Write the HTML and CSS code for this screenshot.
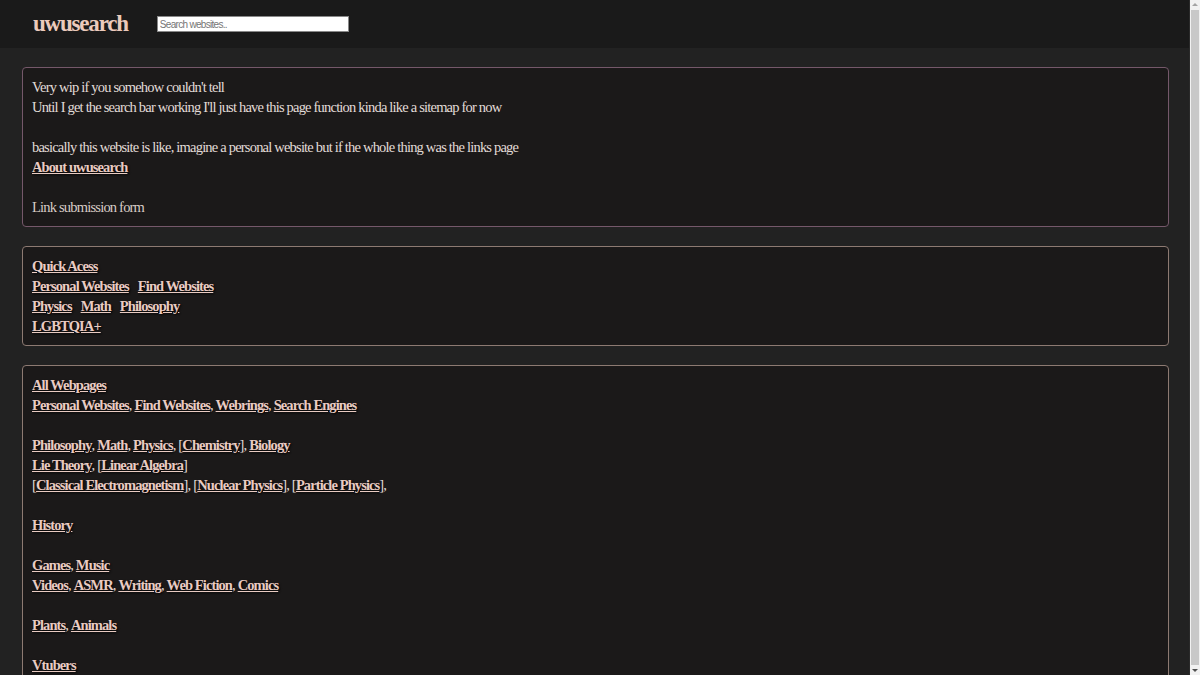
FILE: index.html
```html
<!DOCTYPE html>
<html>
<head>
<meta charset="utf-8">
<title>uwusearch</title>
<link rel="stylesheet" href="styles.css">
</head>
<body>
<div class="page">
  <header class="topbar">
    <a class="logo" href="#">uwusearch</a>
    <input class="search" type="text" placeholder="Search websites..">
  </header>
  <main class="content">
    <section class="card card-intro">
      <p>Very wip if you somehow couldn't tell</p>
      <p>Until I get the search bar working I'll just have this page function kinda like a sitemap for now</p>
      <p class="blank">&nbsp;</p>
      <p>basically this website is like, imagine a personal website but if the whole thing was the links page</p>
      <p><a class="lnk" href="#">About uwusearch</a></p>
      <p class="blank">&nbsp;</p>
      <p class="plain">Link submission form</p>
    </section>
    <section class="card card-links">
      <p><a class="lnk" href="#">Quick Acess</a></p>
      <p class="spaced"><a class="lnk" href="#">Personal Websites</a><a class="lnk" href="#">Find Websites</a></p>
      <p class="spaced"><a class="lnk" href="#">Physics</a><a class="lnk" href="#">Math</a><a class="lnk" href="#">Philosophy</a></p>
      <p><a class="lnk" href="#">LGBTQIA+</a></p>
    </section>
    <section class="card card-links">
      <p><a class="lnk" href="#">All Webpages</a></p>
      <p><a class="lnk" href="#">Personal Websites</a>, <a class="lnk" href="#">Find Websites</a>, <a class="lnk" href="#">Webrings</a>, <a class="lnk" href="#">Search Engines</a></p>
      <p class="blank">&nbsp;</p>
      <p><a class="lnk" href="#">Philosophy</a>, <a class="lnk" href="#">Math</a>, <a class="lnk" href="#">Physics</a>, [<a class="lnk" href="#">Chemistry</a>], <a class="lnk" href="#">Biology</a></p>
      <p><a class="lnk" href="#">Lie Theory</a>, [<a class="lnk" href="#">Linear Algebra</a>]</p>
      <p>[<a class="lnk" href="#">Classical Electromagnetism</a>], [<a class="lnk" href="#">Nuclear Physics</a>], [<a class="lnk" href="#">Particle Physics</a>],</p>
      <p class="blank">&nbsp;</p>
      <p><a class="lnk" href="#">History</a></p>
      <p class="blank">&nbsp;</p>
      <p><a class="lnk" href="#">Games</a>, <a class="lnk" href="#">Music</a></p>
      <p><a class="lnk" href="#">Videos</a>, <a class="lnk" href="#">ASMR</a>, <a class="lnk" href="#">Writing</a>, <a class="lnk" href="#">Web Fiction</a>, <a class="lnk" href="#">Comics</a></p>
      <p class="blank">&nbsp;</p>
      <p><a class="lnk" href="#">Plants</a>, <a class="lnk" href="#">Animals</a></p>
      <p class="blank">&nbsp;</p>
      <p><a class="lnk" href="#">Vtubers</a></p>
    </section>
  </main>
</div>
<div class="scrollbar">
  <div class="arrow arrow-up"></div>
  <div class="thumb"></div>
  <div class="arrow arrow-down"></div>
</div>
</body>
</html>
```
FILE: styles.css
```css
html, body {
  margin: 0;
  padding: 0;
}
body {
  background: #222222;
  color: #e2dcd8;
  font-family: "Liberation Serif", "Times New Roman", serif;
  font-size: 14.5px;
  line-height: 20px;
  letter-spacing: -0.8px;
  overflow: hidden;
}
.page {
  margin-right: 10px;
}
.topbar {
  background: #1a1a1a;
  height: 48px;
  display: flex;
  align-items: center;
  padding-left: 33px;
}
.logo {
  color: #eccabc;
  font-weight: bold;
  font-size: 23px;
  letter-spacing: -1.2px;
  text-decoration: none;
  margin-right: 29px;
  margin-top: -1px;
}
.search {
  width: 192px;
  height: 16px;
  box-sizing: border-box;
  border: 1px solid #888;
  background: #fff;
  font-family: "Liberation Sans", Arial, sans-serif;
  font-size: 10px;
  letter-spacing: -0.7px;
  padding: 0 2px;
  margin: 0;
}
.search::placeholder {
  color: #767676;
}
.content {
  padding: 19px 21px 20px 22px;
  display: flex;
  flex-direction: column;
  gap: 19px;
}
.card {
  background: #1b1919;
  border: 1px solid #75586a;
  border-radius: 4px;
  padding: 9px;
}
.card-links {
  border-color: #8d7a72;
}
.card p {
  margin: 0;
  height: 20px;
  white-space: nowrap;
}
.lnk {
  color: #e9cbc2;
  font-weight: bold;
  letter-spacing: -0.9px;
  text-decoration: underline;
  text-shadow: 1px 1px 2px #000;
}
.spaced .lnk + .lnk {
  margin-left: 9px;
}
.plain {
  color: #d8ccc6;
}
.scrollbar {
  position: fixed;
  top: 0;
  right: 0;
  bottom: 0;
  width: 10px;
  background: #f1f1f1;
  border-left: 1px solid #2a2a2a;
  display: flex;
  flex-direction: column;
  align-items: center;
}
.arrow {
  width: 0;
  height: 0;
  border-left: 3px solid transparent;
  border-right: 3px solid transparent;
  margin: 3px 0;
}
.arrow-up {
  border-bottom: 3px solid #a3a3a3;
}
.arrow-down {
  border-top: 3px solid #505050;
}
.thumb {
  flex: 1;
  width: 8px;
  background: #c8c8c8;
  margin: 1px 0;
}
```
